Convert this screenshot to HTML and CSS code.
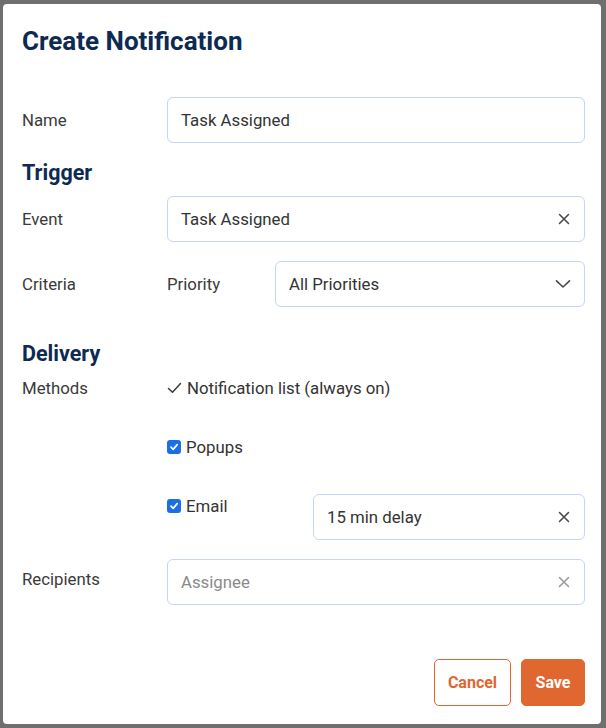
FILE: index.html
```html
<!DOCTYPE html>
<html>
<head>
<meta charset="utf-8">
<link rel="stylesheet" href="styles.css">
</head>
<body>
<div class="dialog">
  <h1 class="title">Create Notification</h1>

  <div class="row row-name">
    <div class="label">Name</div>
    <div class="field"><span class="value">Task Assigned</span></div>
  </div>

  <h2 class="section section-trigger">Trigger</h2>

  <div class="row row-event">
    <div class="label">Event</div>
    <div class="field">
      <span class="value">Task Assigned</span>
      <svg class="icon-x" width="12" height="12" viewBox="0 0 12 12"><path d="M1.5 1.5 L10.5 10.5 M10.5 1.5 L1.5 10.5" stroke="#4a4a4a" stroke-width="1.6" stroke-linecap="round"/></svg>
    </div>
  </div>

  <div class="row row-criteria">
    <div class="label">Criteria</div>
    <div class="sub">
      <div class="sublabel">Priority</div>
      <div class="field">
        <span class="value">All Priorities</span>
        <svg class="icon-chev" width="16" height="10" viewBox="0 0 16 10"><path d="M1.5 1.8 L8 8 L14.5 1.8" fill="none" stroke="#4a4a4a" stroke-width="1.6" stroke-linecap="round" stroke-linejoin="round"/></svg>
      </div>
    </div>
  </div>

  <h2 class="section section-delivery">Delivery</h2>

  <div class="row row-methods">
    <div class="label">Methods</div>
    <div class="methods">
      <div class="method always">
        <svg class="tick" width="15" height="12" viewBox="0 0 15 12"><path d="M1.5 6.5 L5.5 10.3 L13.5 1.5" fill="none" stroke="#3a3a3a" stroke-width="1.5" stroke-linecap="round" stroke-linejoin="round"/></svg>
        <span>Notification list (always on)</span>
      </div>
      <div class="method">
        <span class="check"><svg width="10" height="10" viewBox="0 0 10 10"><path d="M2 5.2 L4.2 7.4 L8.2 2.6" fill="none" stroke="#fff" stroke-width="1.7" stroke-linecap="round" stroke-linejoin="round"/></svg></span>
        <span>Popups</span>
      </div>
      <div class="method email">
        <div class="email-check">
          <span class="check"><svg width="10" height="10" viewBox="0 0 10 10"><path d="M2 5.2 L4.2 7.4 L8.2 2.6" fill="none" stroke="#fff" stroke-width="1.7" stroke-linecap="round" stroke-linejoin="round"/></svg></span>
          <span>Email</span>
        </div>
        <div class="field">
          <span class="value">15 min delay</span>
          <svg class="icon-x" width="12" height="12" viewBox="0 0 12 12"><path d="M1.5 1.5 L10.5 10.5 M10.5 1.5 L1.5 10.5" stroke="#4a4a4a" stroke-width="1.6" stroke-linecap="round"/></svg>
        </div>
      </div>
    </div>
  </div>

  <div class="row row-recipients">
    <div class="label">Recipients</div>
    <div class="field">
      <span class="value placeholder">Assignee</span>
      <svg class="icon-x" width="12" height="12" viewBox="0 0 12 12"><path d="M1.5 1.5 L10.5 10.5 M10.5 1.5 L1.5 10.5" stroke="#9a9a9a" stroke-width="1.6" stroke-linecap="round"/></svg>
    </div>
  </div>

  <div class="actions">
    <button class="btn btn-cancel">Cancel</button>
    <button class="btn btn-save">Save</button>
  </div>
</div>
</body>
</html>
```

FILE: styles.css
```css
html, body {
  margin: 0;
  padding: 0;
}
body {
  background: #6f6f6f;
  font-family: Roboto, "Liberation Sans", Arial, sans-serif;
  color: #3a3a3a;
}
.dialog {
  box-sizing: border-box;
  margin: 4px 5px 0 3px;
  height: 720px;
  background: #fff;
  border-radius: 4px;
  padding: 22px 16px 0 19px;
  display: flex;
  flex-direction: column;
}
.title {
  margin: 0;
  font-size: 26px;
  line-height: 30px;
  font-weight: 700;
  color: #0d2a52;
}
.section {
  margin: 0;
  font-size: 21.5px;
  line-height: 26px;
  font-weight: 700;
  color: #0d2a52;
}
.row {
  display: flex;
  align-items: center;
}
.label {
  width: 145px;
  flex: none;
  font-size: 16.8px;
  line-height: 20px;
  color: #3a3a3a;
}
.field {
  box-sizing: border-box;
  flex: 1;
  height: 46px;
  border: 1.5px solid #c2d6f6;
  border-radius: 6px;
  display: flex;
  align-items: center;
  justify-content: space-between;
  padding: 0 13px 0 13px;
}
.value {
  font-size: 16.8px;
  color: #333;
}
.placeholder {
  color: #8a8a8a;
}
.icon-x {
  display: block;
  margin-right: 1px;
}
.icon-chev {
  display: block;
  margin-right: 0;
}
.row-name {
  margin-top: 41px;
}
.section-trigger {
  margin-top: 17px;
}
.row-event {
  margin-top: 10px;
}
.row-criteria {
  margin-top: 19px;
}
.sub {
  flex: 1;
  display: flex;
  align-items: center;
}
.sublabel {
  width: 108px;
  flex: none;
  font-size: 16.8px;
  line-height: 20px;
}
.section-delivery {
  margin-top: 34px;
}
.row-methods {
  margin-top: 11px;
  align-items: flex-start;
}
.methods {
  flex: 1;
  display: flex;
  flex-direction: column;
  gap: 39px;
}
.method {
  display: flex;
  align-items: center;
  font-size: 16.8px;
  line-height: 20px;
  color: #333;
}
.tick {
  display: block;
  margin-right: 5px;
}
.check {
  width: 14px;
  height: 14px;
  border-radius: 3px;
  background: #1a6fe6;
  display: flex;
  align-items: center;
  justify-content: center;
  margin-right: 5px;
  flex: none;
}
.check svg {
  display: block;
}
.method.email {
  align-items: flex-start;
}
.email-check {
  width: 146px;
  flex: none;
  display: flex;
  align-items: center;
  height: 20px;
}
.method.email .field {
  margin-top: -2px;
}
.row-recipients {
  margin-top: 19px;
}
.row-recipients .label {
  margin-top: -6px;
}
.actions {
  margin-top: 54px;
  display: flex;
  justify-content: flex-end;
  gap: 10px;
}
.btn {
  box-sizing: border-box;
  height: 47px;
  border-radius: 5px;
  font-family: Roboto, "Liberation Sans", Arial, sans-serif;
  font-size: 16px;
  font-weight: 700;
  padding: 0;
}
.btn-cancel {
  width: 77px;
  background: #fff;
  border: 1.5px solid #e0672f;
  color: #e0672f;
}
.btn-save {
  width: 64px;
  background: #e0672f;
  border: 1.5px solid #e0672f;
  color: #fff;
}
```
